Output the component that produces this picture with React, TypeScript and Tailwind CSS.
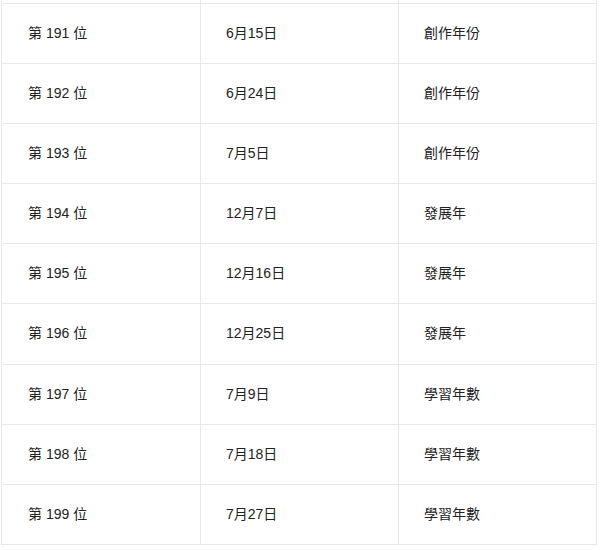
import React from "react";

const rows: [string, string, string][] = [
  ["", "", ""],
  ["第 191 位", "6月15日", "創作年份"],
  ["第 192 位", "6月24日", "創作年份"],
  ["第 193 位", "7月5日", "創作年份"],
  ["第 194 位", "12月7日", "發展年"],
  ["第 195 位", "12月16日", "發展年"],
  ["第 196 位", "12月25日", "發展年"],
  ["第 197 位", "7月9日", "學習年數"],
  ["第 198 位", "7月18日", "學習年數"],
  ["第 199 位", "7月27日", "學習年數"],
];

export default function App() {
  return (
    <div className="w-[600px] h-[550px] overflow-hidden bg-white">
      <div
        className="ml-px mt-[-56.6px] w-[596px] border-l border-[#e8e8e8] text-[14px] text-[#222]"
        style={{ fontFamily: '"Liberation Sans", "Noto Sans CJK TC", sans-serif' }}
      >
        {rows.map((r, i) => (
          <div
            key={i}
            className="grid grid-cols-[199px_198px_198px] h-[60.17px] border-b border-[#e8e8e8]"
          >
            {r.map((c, j) => (
              <div
                key={j}
                className={`flex items-center border-r border-[#e8e8e8] ${j === 0 ? "pl-[26px]" : "pl-[25px]"}`}
              >
                {c}
              </div>
            ))}
          </div>
        ))}
      </div>
    </div>
  );
}
